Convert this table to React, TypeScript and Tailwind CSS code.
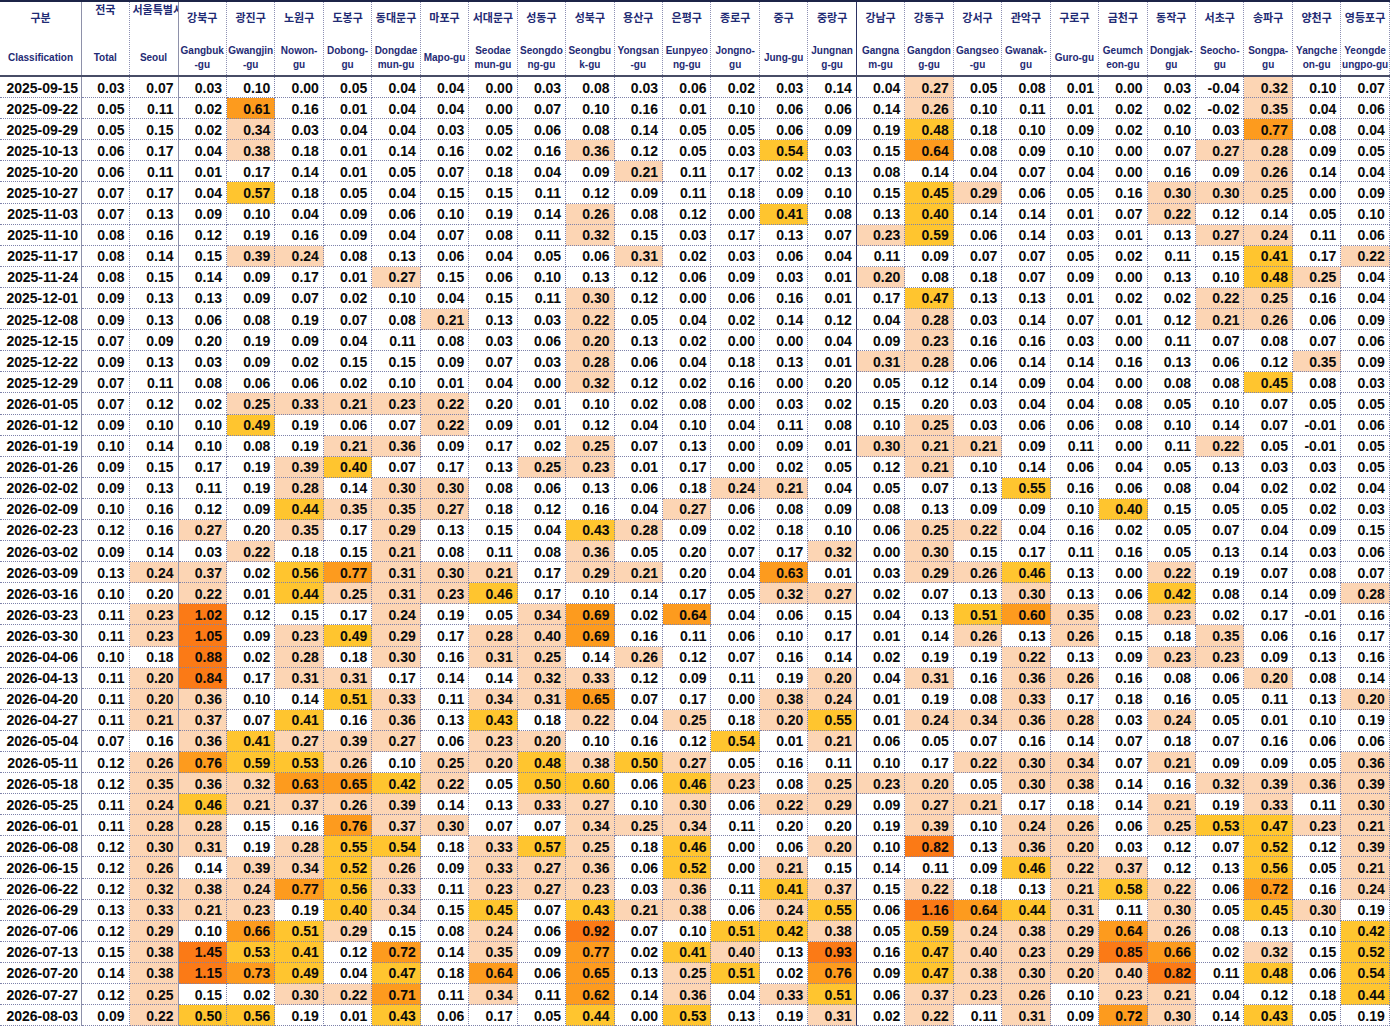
import React from 'react';

// district header labels: korean, english (line 1, line 2)
const COLS: [string, string, string][] = [
  ['강북구', 'Gangbuk', '-gu'],
  ['광진구', 'Gwangjin', '-gu'],
  ['노원구', 'Nowon-', 'gu'],
  ['도봉구', 'Dobong-', 'gu'],
  ['동대문구', 'Dongdae', 'mun-gu'],
  ['마포구', 'Mapo-gu', ''],
  ['서대문구', 'Seodae', 'mun-gu'],
  ['성동구', 'Seongdo', 'ng-gu'],
  ['성북구', 'Seongbu', 'k-gu'],
  ['용산구', 'Yongsan', '-gu'],
  ['은평구', 'Eunpyeo', 'ng-gu'],
  ['종로구', 'Jongno-', 'gu'],
  ['중구', 'Jung-gu', ''],
  ['중랑구', 'Jungnan', 'g-gu'],
  ['강남구', 'Gangna', 'm-gu'],
  ['강동구', 'Gangdon', 'g-gu'],
  ['강서구', 'Gangseo', '-gu'],
  ['관악구', 'Gwanak-', 'gu'],
  ['구로구', 'Guro-gu', ''],
  ['금천구', 'Geumch', 'eon-gu'],
  ['동작구', 'Dongjak-', 'gu'],
  ['서초구', 'Seocho-', 'gu'],
  ['송파구', 'Songpa-', 'gu'],
  ['양천구', 'Yangche', 'on-gu'],
  ['영등포구', 'Yeongde', 'ungpo-gu'],
];

// date, total, seoul, then 25 districts. "+" / "-" nudge the colour band of a cell
const DATA = `
2025-09-15 0.03 0.07 0.03 0.10 0.00 0.05 0.04 0.04 0.00 0.03 0.08 0.03 0.06 0.02 0.03 0.14 0.04 0.27 0.05 0.08 0.01 0.00 0.03 -0.04 0.32 0.10 0.07
2025-09-22 0.05 0.11 0.02 0.61 0.16 0.01 0.04 0.04 0.00 0.07 0.10 0.16 0.01 0.10 0.06 0.06 0.14 0.26 0.10 0.11 0.01 0.02 0.02 -0.02 0.35 0.04 0.06
2025-09-29 0.05 0.15 0.02 0.34 0.03 0.04 0.04 0.03 0.05 0.06 0.08 0.14 0.05 0.05 0.06 0.09 0.19 0.48 0.18 0.10 0.09 0.02 0.10 0.03 0.77 0.08 0.04
2025-10-13 0.06 0.17 0.04 0.38 0.18 0.01 0.14 0.16 0.02 0.16 0.36 0.12 0.05 0.03 0.54 0.03 0.15 0.64 0.08 0.09 0.10 0.00 0.07 0.27 0.28 0.09 0.05
2025-10-20 0.06 0.11 0.01 0.17 0.14 0.01 0.05 0.07 0.18 0.04 0.09 0.21 0.11 0.17 0.02 0.13 0.08 0.14 0.04 0.07 0.04 0.00 0.16 0.09 0.26 0.14 0.04
2025-10-27 0.07 0.17 0.04 0.57 0.18 0.05 0.04 0.15 0.15 0.11 0.12 0.09 0.11 0.18 0.09 0.10 0.15 0.45 0.29 0.06 0.05 0.16 0.30 0.30 0.25 0.00 0.09
2025-11-03 0.07 0.13 0.09 0.10 0.04 0.09 0.06 0.10 0.19 0.14 0.26 0.08 0.12 0.00 0.41 0.08 0.13 0.40 0.14 0.14 0.01 0.07 0.22 0.12 0.14 0.05 0.10
2025-11-10 0.08 0.16 0.12 0.19 0.16 0.09 0.04 0.07 0.08 0.11 0.32 0.15 0.03 0.17 0.13 0.07 0.23 0.59 0.06 0.14 0.03 0.01 0.13 0.27 0.24 0.11 0.06
2025-11-17 0.08 0.14 0.15 0.39 0.24 0.08 0.13 0.06 0.04 0.05 0.06 0.31 0.02 0.03 0.06 0.04 0.11 0.09 0.07 0.07 0.05 0.02 0.11 0.15 0.41 0.17 0.22
2025-11-24 0.08 0.15 0.14 0.09 0.17 0.01 0.27 0.15 0.06 0.10 0.13 0.12 0.06 0.09 0.03 0.01 0.20+ 0.08 0.18 0.07 0.09 0.00 0.13 0.10 0.48 0.25 0.04
2025-12-01 0.09 0.13 0.13 0.09 0.07 0.02 0.10 0.04 0.15 0.11 0.30 0.12 0.00 0.06 0.16 0.01 0.17 0.47 0.13 0.13 0.01 0.02 0.02 0.22 0.25 0.16 0.04
2025-12-08 0.09 0.13 0.06 0.08 0.19 0.07 0.08 0.21 0.13 0.03 0.22 0.05 0.04 0.02 0.14 0.12 0.04 0.28 0.03 0.14 0.07 0.01 0.12 0.21 0.26 0.06 0.09
2025-12-15 0.07 0.09 0.20 0.19 0.09 0.04 0.11 0.08 0.03 0.06 0.20+ 0.13 0.02 0.00 0.00 0.04 0.09 0.23 0.16 0.16 0.03 0.00 0.11 0.07 0.08 0.07 0.06
2025-12-22 0.09 0.13 0.03 0.09 0.02 0.15 0.15 0.09 0.07 0.03 0.28 0.06 0.04 0.18 0.13 0.01 0.31 0.28 0.06 0.14 0.14 0.16 0.13 0.06 0.12 0.35 0.09
2025-12-29 0.07 0.11 0.08 0.06 0.06 0.02 0.10 0.01 0.04 0.00 0.32 0.12 0.02 0.16 0.00 0.20 0.05 0.12 0.14 0.09 0.04 0.00 0.08 0.08 0.45 0.08 0.03
2026-01-05 0.07 0.12 0.02 0.25 0.33 0.21 0.23 0.22 0.20 0.01 0.10 0.02 0.08 0.00 0.03 0.02 0.15 0.20 0.03 0.04 0.04 0.08 0.05 0.10 0.07 0.05 0.05
2026-01-12 0.09 0.10 0.10 0.49 0.19 0.06 0.07 0.22 0.09 0.01 0.12 0.04 0.10 0.04 0.11 0.08 0.10 0.25 0.03 0.06 0.06 0.08 0.10 0.14 0.07 -0.01 0.06
2026-01-19 0.10 0.14 0.10 0.08 0.19 0.21 0.36 0.09 0.17 0.02 0.25 0.07 0.13 0.00 0.09 0.01 0.30 0.21 0.21 0.09 0.11 0.00 0.11 0.22 0.05 -0.01 0.05
2026-01-26 0.09 0.15 0.17 0.19 0.39 0.40 0.07 0.17 0.13 0.25 0.23 0.01 0.17 0.00 0.02 0.05 0.12 0.21 0.10 0.14 0.06 0.04 0.05 0.13 0.03 0.03 0.05
2026-02-02 0.09 0.13 0.11 0.19 0.28 0.14 0.30 0.30 0.08 0.06 0.13 0.06 0.18 0.24 0.21 0.04 0.05 0.07 0.13 0.55 0.16 0.06 0.08 0.04 0.02 0.02 0.04
2026-02-09 0.10 0.16 0.12 0.09 0.44 0.35 0.35 0.27 0.18 0.12 0.16 0.04 0.27 0.06 0.08 0.09 0.08 0.13 0.09 0.09 0.10 0.40 0.15 0.05 0.05 0.02 0.03
2026-02-23 0.12 0.16 0.27 0.20 0.35 0.17 0.29 0.13 0.15 0.04 0.43 0.28 0.09 0.02 0.18 0.10 0.06 0.25 0.22 0.04 0.16 0.02 0.05 0.07 0.04 0.09 0.15
2026-03-02 0.09 0.14 0.03 0.22 0.18 0.15 0.21 0.08 0.11 0.08 0.36 0.05 0.20 0.07 0.17 0.32 0.00 0.30 0.15 0.17 0.11 0.16 0.05 0.13 0.14 0.03 0.06
2026-03-09 0.13 0.24 0.37 0.02 0.56 0.77 0.31 0.30 0.21 0.17 0.29 0.21 0.20 0.04 0.63 0.01 0.03 0.29 0.26 0.46 0.13 0.00 0.22 0.19 0.07 0.08 0.07
2026-03-16 0.10 0.20 0.22 0.01 0.44 0.25 0.31 0.23 0.46 0.17 0.10 0.14 0.17 0.05 0.32 0.27 0.02 0.07 0.13 0.30 0.13 0.06 0.42 0.08 0.14 0.09 0.28
2026-03-23 0.11 0.23 1.02 0.12 0.15 0.17 0.24 0.19 0.05 0.34 0.69 0.02 0.64 0.04 0.06 0.15 0.04 0.13 0.51 0.60 0.35 0.08 0.23 0.02 0.17 -0.01 0.16
2026-03-30 0.11 0.23 1.05 0.09 0.23 0.49 0.29 0.17 0.28 0.40- 0.69 0.16 0.11 0.06 0.10 0.17 0.01 0.14 0.26 0.13 0.26 0.15 0.18 0.35 0.06 0.16 0.17
2026-04-06 0.10 0.18 0.88 0.02 0.28 0.18 0.30 0.16 0.31 0.25 0.14 0.26 0.12 0.07 0.16 0.14 0.02 0.19 0.19 0.22 0.13 0.09 0.23 0.23 0.09 0.13 0.16
2026-04-13 0.11 0.20+ 0.84 0.17 0.31 0.31 0.17 0.14 0.14 0.32 0.33 0.12 0.09 0.11 0.19 0.20+ 0.04 0.31 0.16 0.36 0.26 0.16 0.08 0.06 0.20+ 0.08 0.14
2026-04-20 0.11 0.20+ 0.36 0.10 0.14 0.51 0.33 0.11 0.34 0.31 0.65 0.07 0.17 0.00 0.38 0.24 0.01 0.19 0.08 0.33 0.17 0.18 0.16 0.05 0.11 0.13 0.20+
2026-04-27 0.11 0.21 0.37 0.07 0.41 0.16 0.36 0.13 0.43 0.18 0.22 0.04 0.25 0.18 0.20+ 0.55 0.01 0.24 0.34 0.36 0.28 0.03 0.24 0.05 0.01 0.10 0.19
2026-05-04 0.07 0.16 0.36 0.41 0.27 0.39 0.27 0.06 0.23 0.20+ 0.10 0.16 0.12 0.54 0.01 0.21 0.06 0.05 0.07 0.16 0.14 0.07 0.18 0.07 0.16 0.06 0.06
2026-05-11 0.12 0.26 0.76 0.59 0.53 0.26 0.10 0.25 0.20+ 0.48 0.38 0.50 0.27 0.05 0.16 0.11 0.10 0.17 0.22 0.30 0.34 0.07 0.21 0.09 0.09 0.05 0.36
2026-05-18 0.12 0.35 0.36 0.32 0.63 0.65 0.42 0.22 0.05 0.50 0.60- 0.06 0.46 0.23 0.08 0.25 0.23 0.20+ 0.05 0.30 0.38 0.14 0.16 0.32 0.39 0.36 0.39
2026-05-25 0.11 0.24 0.46 0.21 0.37 0.26 0.39 0.14 0.13 0.33 0.27 0.10 0.30 0.06 0.22 0.29 0.09 0.27 0.21 0.17 0.18 0.14 0.21 0.19 0.33 0.11 0.30
2026-06-01 0.11 0.28 0.28 0.15 0.16 0.76 0.37 0.30 0.07 0.07 0.34 0.25 0.34 0.11 0.20 0.20 0.19 0.39 0.10 0.24 0.26 0.06 0.25 0.53 0.47 0.23 0.21
2026-06-08 0.12 0.30 0.31 0.19 0.28 0.55 0.54 0.18 0.33 0.57 0.25 0.18 0.46 0.00 0.06 0.20+ 0.10 0.82 0.13 0.36 0.20+ 0.03 0.12 0.07 0.52 0.12 0.39
2026-06-15 0.12 0.26 0.14 0.39 0.34 0.52 0.26 0.09 0.33 0.27 0.36 0.06 0.52 0.00 0.21 0.15 0.14 0.11 0.09 0.46 0.22 0.37 0.12 0.13 0.56 0.05 0.21
2026-06-22 0.12 0.32 0.38 0.24 0.77 0.56 0.33 0.11 0.23 0.27 0.23 0.03 0.36 0.11 0.41 0.37 0.15 0.22 0.18 0.13 0.21 0.58 0.22 0.06 0.72 0.16 0.24
2026-06-29 0.13 0.33 0.21 0.23 0.19 0.40 0.34 0.15 0.45 0.07 0.43 0.21 0.38 0.06 0.24 0.55 0.06 1.16 0.64 0.44 0.31 0.11 0.30 0.05 0.45 0.30 0.19
2026-07-06 0.12 0.29 0.10 0.66 0.51 0.29 0.15 0.08 0.24 0.06 0.92 0.07 0.10 0.51 0.42 0.38 0.05 0.59 0.24 0.38 0.29 0.64 0.26 0.08 0.13 0.10 0.42
2026-07-13 0.15 0.38 1.45 0.53 0.41 0.12 0.72 0.14 0.35 0.09 0.77 0.02 0.41 0.40- 0.13 0.93 0.16 0.47 0.40- 0.23 0.29 0.85 0.66 0.02 0.32 0.15 0.52
2026-07-20 0.14 0.38 1.15 0.73 0.49 0.04 0.47 0.18 0.64 0.06 0.65 0.13 0.25 0.51 0.02 0.76 0.09 0.47 0.38 0.30 0.20+ 0.40- 0.82 0.11 0.48 0.06 0.54
2026-07-27 0.12 0.25 0.15 0.02 0.30 0.22 0.71 0.11 0.34 0.11 0.62 0.14 0.36 0.04 0.33 0.51 0.06 0.37 0.23 0.26 0.10 0.23 0.21 0.04 0.12 0.18 0.44
2026-08-03 0.09 0.22 0.50 0.56 0.19 0.01 0.43 0.06 0.17 0.05 0.44 0.00 0.53 0.13 0.19 0.31 0.02 0.22 0.11 0.31 0.09 0.72 0.30 0.14 0.43 0.05 0.19
`
  .trim()
  .split('\n')
  .map((line) => line.trim().split(/\s+/));

const BANDS = ['bg-white', 'bg-[#fcd5b4]', 'bg-[#ffc52f]', 'bg-[#fd9b1e]', 'bg-[#fb7a16]'];

function band(tok: string) {
  const v = parseFloat(tok);
  let b = v >= 0.8 ? 4 : v >= 0.6 ? 3 : v >= 0.4 ? 2 : v > 0.2 ? 1 : 0;
  if (tok.endsWith('+')) b += 1;
  if (tok.length > 1 && tok.endsWith('-')) b -= 1;
  return BANDS[Math.max(0, Math.min(4, b))];
}

const clean = (tok: string) => tok.replace(/[+-]$/, '');

// column index -> border rule on its right side
function sideLine(i: number) {
  if (i === -1 || i === 1) return '[border-style:dotted_solid_dotted_dotted] border-r-[#8e91aa]';
  if (i === 15) return '[border-style:dotted_solid_dotted_dotted] border-r-[#2c3263]';
  return 'border-dotted';
}

function widthOf(i: number) {
  if (i === -1) return 'w-[82px] shrink-0';
  if (i === 0) return 'w-[47.5px] shrink-0';
  if (i === 1) return 'w-[49px] shrink-0';
  return 'flex-1 min-w-0';
}

function HeadCell({ i, ko, en1, en2, top, clip }: { i: number; ko: string; en1: string; en2: string; top?: boolean; clip?: boolean }) {
  return (
    <div className={`${widthOf(i)} ${sideLine(i)} flex flex-col border-r border-[#8d90b4]`}>
      <div
        className={`h-[38px] flex overflow-hidden whitespace-nowrap text-[11px] leading-[14px] ${
          top ? 'items-start pt-[1px]' : 'items-center pb-[6px]'
        } ${clip ? 'justify-start pl-[3px]' : 'justify-center'}`}
      >
        {ko}
      </div>
      <div className="flex-1 flex flex-col items-center justify-center text-center text-[10px] leading-[14px] overflow-hidden whitespace-nowrap">
        <span>{en1}</span>
        {en2 && <span>{en2}</span>}
      </div>
    </div>
  );
}

const App: React.FC = () => {
  return (
    <div
      className="w-[1390px] h-[1027px] overflow-hidden bg-white text-[#0a0a0a]"
      style={{ fontFamily: "'Liberation Sans', Arial, 'Noto Sans CJK KR', sans-serif" }}
    >
      {/* header */}
      <div className="flex h-[77px] border-t-2 border-b-2 border-t-[#1c2447] border-b-[#474c66] font-bold text-[#1f2b74]">
        <HeadCell i={-1} ko="구분" en1="Classification" en2="" />
        <HeadCell i={0} ko="전국" en1="Total" en2="" top />
        <HeadCell i={1} ko="서울특별시" en1="Seoul" en2="" top clip />
        {COLS.map(([ko, a, b], k) => (
          <HeadCell key={ko} i={k + 2} ko={ko} en1={a} en2={b} />
        ))}
      </div>

      {/* rows */}
      {DATA.map(([date, ...vals]) => (
        <div key={date} className="flex h-[21.1px] font-bold text-[14px] leading-[19px]">
          <div className={`${widthOf(-1)} ${sideLine(-1)} border-r border-b border-[#7e82aa] text-right pr-[3px] pt-[1.5px] whitespace-nowrap`}>
            {date}
          </div>
          {vals.map((tok, i) => (
            <div
              key={i}
              className={`${widthOf(i)} ${sideLine(i)} ${band(tok)} border-r border-b border-[#7e82aa] text-right pr-[4px] pt-[1.5px] whitespace-nowrap overflow-hidden`}
            >
              {clean(tok)}
            </div>
          ))}
        </div>
      ))}
    </div>
  );
};

export default App;
